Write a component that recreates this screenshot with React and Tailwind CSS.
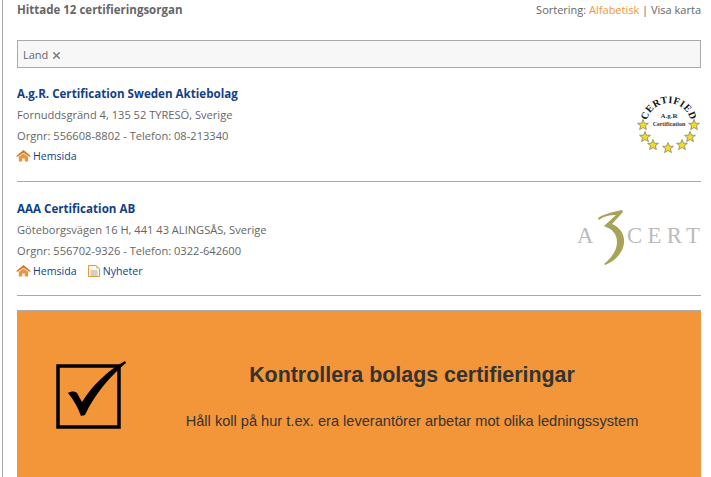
import React from 'react';
import { X } from 'lucide-react';

const bodyFont = "font-['Open_Sans','Noto_Sans',sans-serif]";

function HomeIcon() {
  return (
    <svg width="15" height="12" viewBox="0 0 15 12" className="shrink-0">
      <path d="M7.5 0 L15 6.2 L13.4 6.8 L7.5 2.8 L1.6 6.8 L0 6.2 Z" fill="#cf7a24" />
      <path d="M2.8 6.8 L7.5 3.6 L12.2 6.8 V11.5 H8.8 V8.5 H6.2 V11.5 H2.8 Z" fill="#e8973c" />
    </svg>
  );
}

function NewsIcon() {
  return (
    <svg width="12" height="12" viewBox="0 0 12 12" className="shrink-0">
      <path d="M0.5 0.5 H8 L11.5 3.5 V11.5 H0.5 Z" fill="#fff8e8" stroke="#e0993f" />
      <path d="M8 0.5 V3.5 H11.5 Z" fill="#e8c48a" />
      <path d="M2.5 6 H9.5 M2.5 8 H9.5 M2.5 10 H9.5" stroke="#a5a5a5" />
    </svg>
  );
}

function CertifiedLogo() {
  const stars = [
    [14, 36], [65, 36], [16, 48], [61, 48], [24, 56], [53, 56], [39, 59],
  ];
  return (
    <svg width="72" height="68" viewBox="0 0 72 68">
      <defs>
        <path id="arc" d="M17.5 40 A22.5 22.5 0 1 1 62 40" />
      </defs>
      <text fontFamily="'Liberation Serif',serif" fontWeight="700" fontSize="10" fill="#111" textAnchor="middle" letterSpacing="0.5">
        <textPath href="#arc" startOffset="50%">CERTIFIED</textPath>
      </text>
      <text x="40" y="29" textAnchor="middle" fontFamily="'Liberation Serif',serif" fontWeight="700" fontSize="7" fill="#333">A.g.R</text>
      <text x="40" y="37" textAnchor="middle" fontFamily="'Liberation Serif',serif" fontWeight="700" fontSize="6" fill="#333">Certification</text>
      {stars.map(([x, y]) => (
        <polygon
          key={`${x}-${y}`}
          transform={`translate(${x} ${y})`}
          points="0,-5.5 1.5,-1.8 5.4,-1.7 2.4,0.8 3.4,4.6 0,2.5 -3.4,4.6 -2.4,0.8 -5.4,-1.7 -1.5,-1.8"
          fill="#f0dc28"
          stroke="#77775a"
          strokeWidth="0.7"
        />
      ))}
    </svg>
  );
}

function A3CertLogo() {
  return (
    <svg width="132" height="66" viewBox="0 0 132 66">
      <g fontFamily="'Liberation Serif',serif" fontSize="22.7" fill="#bbbbbb">
        <text x="2" y="38">A</text>
        <text x="52" y="38" letterSpacing="5.4">CERT</text>
      </g>
      <path
        d="M23 13 C29 9 38 7 47 5 L48 7 L37 19 C45 22 50 30 49 38 C48 48 40 56 30 60 L29 59 C36 53 42 46 42 37 C42 29 37 24 31 22 L29 21 L41 10 C35 10 29 11 24 15 Z"
        fill="#a9a35a"
      />
    </svg>
  );
}

function Company({ name, address, info, news, logo, rowHeight }) {
  return (
    <div className={`flex justify-between ${rowHeight}`}>
      <div>
        <div className="text-[11.6px] leading-[21px] font-bold text-[#123f86]">{name}</div>
        <div className="text-[11.1px] leading-[21px] text-[#666]">{address}</div>
        <div className="text-[11.1px] leading-[21px] text-[#666]">{info}</div>
        <div className="flex items-center text-[10.6px] leading-[20px] text-[#123f86] -ml-px">
          <span className="flex items-center gap-[2px]"><HomeIcon />Hemsida</span>
          {news && <span className="flex items-center gap-[3px] ml-[11px]"><NewsIcon />Nyheter</span>}
        </div>
      </div>
      {logo}
    </div>
  );
}

export default function App() {
  return (
    <div className={`w-[711px] h-[477px] overflow-hidden bg-white ${bodyFont}`}>
      <div className="ml-[2px] h-full border-l border-[#aaa] pl-[14px] pr-[10px]">
        <div className="flex justify-between text-[11px] leading-[20px] text-[#666]">
          <span className="font-bold text-[11.5px]">Hittade 12 certifieringsorgan</span>
          <span>Sortering: <span className="text-[#f39639]">Alfabetisk</span> | Visa karta</span>
        </div>
        <div className="mt-[20px] h-[28px] border border-[#aaa] bg-[#f7f7f7] pl-[5px] pt-[2px] flex items-center gap-[3px] text-[11px] text-[#666]">
          Land
          <X size={11} strokeWidth={3} color="#777" />
        </div>
        <div className="mt-[15px] border-b border-[#aaa]">
          <Company
            name="A.g.R. Certification Sweden Aktiebolag"
            address="Fornuddsgränd 4, 135 52 TYRESÖ, Sverige"
            info="Orgnr: 556608-8802 - Telefon: 08-213340"
            rowHeight="h-[98px]"
            logo={<div className="mt-[6px]"><CertifiedLogo /></div>}
          />
        </div>
        <div className="mt-[16px] border-b border-[#aaa]">
          <Company
            name="AAA Certification AB"
            address="Göteborgsvägen 16 H, 441 43 ALINGSÅS, Sverige"
            info="Orgnr: 556702-9326 - Telefon: 0322-642600"
            news
            rowHeight="h-[97px]"
            logo={<div className="mt-[7px] -mr-[6px]"><A3CertLogo /></div>}
          />
        </div>
        <div className="mt-[14px] h-[170px] bg-[#f39639] border-t border-[#aaa] flex font-['Liberation_Sans',Arial,sans-serif] text-[#333]">
          <div className="w-[123px] shrink-0 pl-[39px] pt-[49px]">
            <svg width="72" height="70" viewBox="0 0 72 70">
              <rect x="2" y="6" width="61" height="61" fill="none" stroke="#000" strokeWidth="3.5" />
              <path d="M12 33 C15 31 19 31 21 33 L26 42 C36 26 52 10 69 1 L70 3 C55 15 38 35 29 55 L25 56 C22 48 18 40 12 33 Z" fill="#000" />
            </svg>
          </div>
          <div className="flex-1 pr-[17px] pt-[51px] text-center">
            <div className="text-[21.4px] leading-[26px] font-bold">Kontrollera bolags certifieringar</div>
            <div className="mt-[23px] text-[14.6px] leading-[20px]">Håll koll på hur t.ex. era leverantörer arbetar mot olika ledningssystem</div>
          </div>
        </div>
      </div>
    </div>
  );
}
